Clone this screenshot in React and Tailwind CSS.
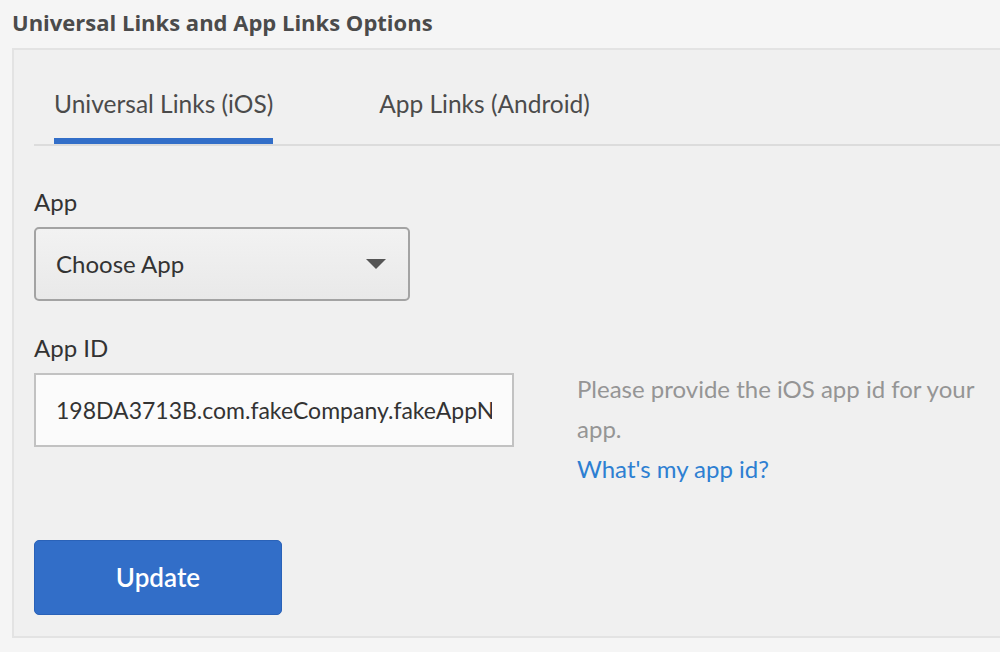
import { useState } from 'react';

const FONT = { fontFamily: 'Lato, "Open Sans", Arial, sans-serif' };

export default function App() {
  const [tab, setTab] = useState('ios');
  const [appId, setAppId] = useState('198DA3713B.com.fakeCompany.fakeAppName');

  return (
    <div className="w-[1000px] h-[652px] overflow-hidden bg-[#f5f5f5] pl-3 pt-2" style={FONT}>
      {/* Section title */}
      <h1 className="text-[22px] leading-[28px] font-bold text-[#4b4b4b] font-['Open_Sans',sans-serif]">
        Universal Links and App Links Options
      </h1>

      {/* Panel */}
      <div className="mt-3 w-[1010px] h-[590px] border-2 border-[#e3e3e3] bg-[#f0f0f0] pl-5">
        {/* Tabs */}
        <div className="flex border-b-2 border-[#dcdcdc]">
          <button
            onClick={() => setTab('ios')}
            className={`ml-5 pt-[39px] pb-[19px] border-b-[6px] text-[24.5px] leading-[30px] text-[#4b4b4b] ${tab === 'ios' ? 'border-[#326ec8]' : 'border-transparent'}`}
          >
            Universal Links (iOS)
          </button>
          <button
            onClick={() => setTab('android')}
            className={`ml-[106px] pt-[39px] pb-[19px] border-b-[6px] text-[24.5px] leading-[30px] text-[#4b4b4b] ${tab === 'android' ? 'border-[#326ec8]' : 'border-transparent'}`}
          >
            App Links (Android)
          </button>
        </div>

        {/* App select */}
        <label className="block mt-[41px] text-[24px] leading-[30px] text-[#333]">App</label>
        <div className="mt-[10px] w-[376px] h-[74px] rounded-[5px] border-2 border-[#a3a3a3] bg-gradient-to-b from-[#f2f2f2] to-[#e9e9e9] flex items-center justify-between pl-5 pr-[22px]">
          <span className="text-[24px] leading-[30px] text-[#333]">Choose App</span>
          <svg width="20" height="10" viewBox="0 0 20 10" className="shrink-0">
            <polygon points="0,0 20,0 10,10" fill="#555" />
          </svg>
        </div>

        {/* App ID */}
        <div className="flex items-start h-[146px]">
          <div>
            <label className="block mt-[32px] text-[24px] leading-[30px] text-[#333]">App ID</label>
            <input
              value={appId}
              onChange={e => setAppId(e.target.value)}
              className="mt-[10px] w-[480px] h-[74px] border-2 border-[#c2c2c2] bg-[#fbfbfb] pl-5 pr-5 text-[23px] text-[#333] outline-none"
            />
          </div>
          <div className="ml-[63px] mt-[68px] text-[24px] leading-[40px] text-[#959595]">
            <p className="whitespace-nowrap">Please provide the iOS app id for your</p>
            <p>app.</p>
            <a href="#" className="text-[#2d7fd2]">What's my app id?</a>
          </div>
        </div>

        {/* Update */}
        <button className="block mt-[93px] w-[248px] h-[75px] rounded-[5px] bg-[#326ec8] border border-[#2a62b8] text-white text-[26px] font-semibold">
          Update
        </button>
      </div>
    </div>
  );
}
